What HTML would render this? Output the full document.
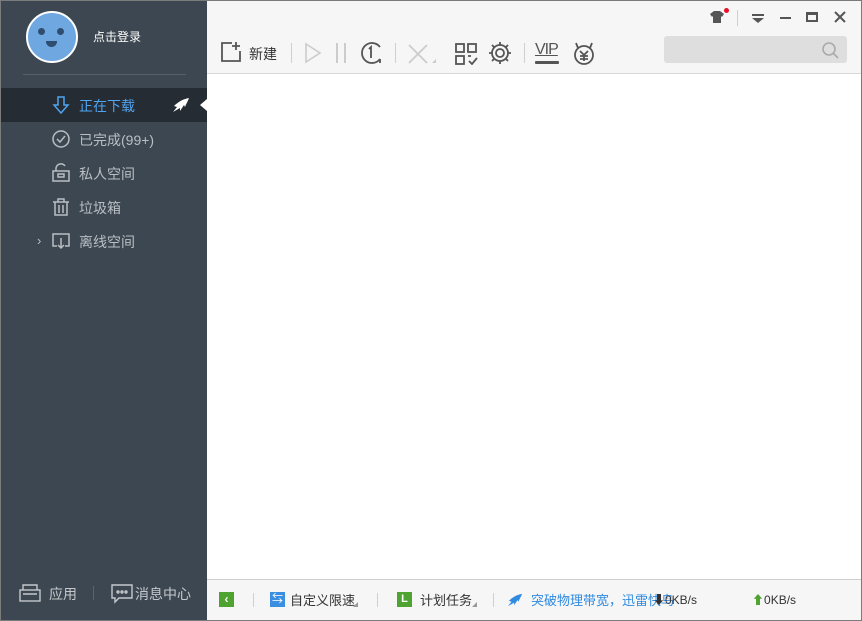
<!DOCTYPE html>
<html><head><meta charset="utf-8"><style>
*{margin:0;padding:0;box-sizing:border-box}
body{width:862px;height:621px;overflow:hidden;background:#fff;font-family:"Liberation Sans","Noto Sans CJK SC",sans-serif;position:relative}
.win{position:absolute;left:0;top:0;width:862px;height:621px;border:1px solid #7b7b7b}
.side{position:absolute;left:1px;top:1px;width:206px;height:619px;background:#3d4751}
.av{position:absolute;left:25px;top:10px;width:52px;height:52px;border-radius:50%;background:#6fa7e0;border:2px solid #fff}
.eye{position:absolute;width:7px;height:7px;border-radius:50%;background:#2f4d6e;top:15px}
.mouth{position:absolute;left:18px;top:28px;width:11px;height:6px;background:#2f4d6e;border-radius:0 0 6px 6px}
.login{position:absolute;left:92px;top:27px;color:#fff;font-size:12px}
.hr{position:absolute;left:22px;top:73px;width:163px;height:1px;background:#56606a}
.item{position:absolute;left:0;width:206px;height:34px;color:#b9bec3;font-size:14px;line-height:34px}
.item span{position:absolute;left:78px;top:1px}
.item svg{position:absolute;left:50px;top:7px}
.act{background:#262c33;color:#4fa3ef}
.main{position:absolute;left:207px;top:1px;width:654px;height:619px;background:#fff}
.tb{position:absolute;left:0;top:0;width:654px;height:73px;background:#f6f6f6;border-bottom:1px solid #d8d8d8}
.sb{position:absolute;left:0;bottom:0;width:654px;height:41px;background:#f6f6f6;border-top:1px solid #cfcfcf;font-size:13px;color:#333}
.ic{position:absolute}
.sep{position:absolute;width:1px;background:#d0d0d0}
</style></head><body>
<div class="win"></div>
<div class="side">
 <div class="av"><div class="eye" style="left:10px"></div><div class="eye" style="left:29px"></div><div class="mouth"></div></div>
 <div class="login">点击登录</div>
 <div class="hr"></div>
 <div class="item act" style="top:87px">
  <svg width="20" height="20" viewBox="0 0 20 20" fill="none" stroke="#4fa3ef" stroke-width="1.5"><path d="M7 2h6v8h4l-7 8-7-8h4z"/></svg>
  <span>正在下载</span>
  <svg style="left:171px;top:9px" width="18" height="16" viewBox="0 0 18 16" fill="#fff"><path d="M17 1C11 2 6 5 2 9l3 1-4 5 7-4 0 3 4-6 1 2c1-3 3-6 4-9z"/></svg>
  <div style="position:absolute;left:199px;top:11px;border-right:7px solid #fff;border-top:6px solid transparent;border-bottom:6px solid transparent"></div>
 </div>
 <div class="item" style="top:121px">
  <svg width="20" height="20" viewBox="0 0 20 20" fill="none" stroke="#b9bec3" stroke-width="1.5"><circle cx="10" cy="10" r="8"/><path d="M6 10l3 3 5-6"/></svg><span>已完成(99+)</span></div>
 <div class="item" style="top:155px">
  <svg width="20" height="20" viewBox="0 0 20 20" fill="none" stroke="#b9bec3" stroke-width="1.5"><path d="M5 8V5a5 5 0 0 1 9-2"/><rect x="2" y="8" width="16" height="10"/><rect x="7" y="11" width="6" height="3"/></svg><span>私人空间</span></div>
 <div class="item" style="top:189px">
  <svg width="20" height="20" viewBox="0 0 20 20" fill="none" stroke="#b9bec3" stroke-width="1.5"><path d="M2 5h16M7 5V2h6v3M4 5v13h12V5M8 8v8M12 8v8"/></svg><span>垃圾箱</span></div>
 <div class="item" style="top:223px">
  <div style="position:absolute;left:36px;top:0;color:#b9bec3;font-size:13px">›</div>
  <svg width="20" height="20" viewBox="0 0 20 20" fill="none" stroke="#b9bec3" stroke-width="1.5"><path d="M6 15H2V3h16v12h-4M10 7v10M7 14l3 3 3-3"/></svg><span>离线空间</span></div>
 <svg class="ic" style="left:18px;top:583px" width="22" height="18" viewBox="0 0 22 18" fill="none" stroke="#c4c8cc" stroke-width="1.4"><rect x="1" y="6" width="20" height="11"/><path d="M4 6V1h14v5M4 10h14"/></svg>
 <div style="position:absolute;left:48px;top:583px;color:#c4c8cc;font-size:14px">应用</div>
 <div style="position:absolute;left:92px;top:585px;width:1px;height:14px;background:#5a646e"></div>
 <svg class="ic" style="left:110px;top:583px" width="22" height="20" viewBox="0 0 22 20" fill="none" stroke="#c4c8cc" stroke-width="1.4"><path d="M1 1h20v13H8l-4 4v-4H1z"/><circle cx="7" cy="8" r="1"/><circle cx="11" cy="8" r="1"/><circle cx="15" cy="8" r="1"/></svg>
 <div style="position:absolute;left:134px;top:583px;color:#c4c8cc;font-size:14px">消息中心</div>
</div>
<div class="main">
 <div class="tb">
  <svg class="ic" style="left:13px;top:40px" width="22" height="22" viewBox="0 0 22 22" fill="none" stroke="#555" stroke-width="1.8"><path d="M12 2H2v18h18V10M16 1v8M12 5h8"/></svg>
  <div style="position:absolute;left:42px;top:43px;font-size:14px;color:#333">新建</div>
  <div class="sep" style="left:84px;top:42px;height:20px"></div>
  <svg class="ic" style="left:96px;top:41px" width="20" height="22" viewBox="0 0 20 22" fill="none" stroke="#ccc" stroke-width="1.6"><path d="M3 2l14 9-14 9z"/></svg>
  <div style="position:absolute;left:129px;top:42px;width:2px;height:20px;background:#ccc"></div>
  <div style="position:absolute;left:137px;top:42px;width:2px;height:20px;background:#ccc"></div>
  <svg class="ic" style="left:152px;top:40px" width="24" height="24" viewBox="0 0 24 24" fill="none" stroke="#555" stroke-width="1.8"><path d="M21 18A10 10 0 1 1 21 6M21 18v4"/><path d="M10 8l2-2v11" /></svg>
  <div class="sep" style="left:188px;top:42px;height:20px"></div>
  <svg class="ic" style="left:200px;top:42px" width="30" height="22" viewBox="0 0 30 22" fill="none" stroke="#ccc" stroke-width="1.8"><path d="M2 2l18 18M20 2L2 20"/><path d="M25 20h4v-4z" fill="#ccc" stroke="none"/></svg>
  <svg class="ic" style="left:248px;top:42px" width="24" height="22" viewBox="0 0 24 22" fill="none" stroke="#555" stroke-width="1.8"><rect x="1" y="1" width="8" height="8"/><rect x="13" y="1" width="8" height="8"/><rect x="1" y="13" width="8" height="8"/><path d="M13 13h3M14 18l3 3 5-6"/></svg>
  <svg class="ic" style="left:281px;top:40px" width="24" height="24" viewBox="0 0 24 24" fill="none" stroke="#555" stroke-width="1.8"><circle cx="12" cy="12" r="8"/><circle cx="12" cy="12" r="4"/><path d="M12 1v3M12 20v3M1 12h3M20 12h3M4 4l2 2M18 18l2 2M4 20l2-2M18 6l2-2"/></svg>
  <div class="sep" style="left:317px;top:42px;height:20px"></div>
  <div style="position:absolute;left:328px;top:40px;font-size:16px;color:#555;text-decoration:underline;letter-spacing:-1px">VIP</div>
  <div style="position:absolute;left:328px;top:60px;width:24px;height:3px;background:#555;border-radius:1px"></div>
  <svg class="ic" style="left:365px;top:40px" width="24" height="24" viewBox="0 0 24 24" fill="none" stroke="#555" stroke-width="1.8"><circle cx="12" cy="14" r="9"/><path d="M6 7L4 2M18 7l2-5M8 10l4 4 4-4M12 14v6M8 15h8M8 18h8"/></svg>
  <svg class="ic" style="left:503px;top:10px" width="14" height="12" viewBox="0 0 14 12" fill="#555"><path d="M4 0h6l4 3-2 3-1-1v7H3V5L2 6 0 3z"/></svg>
  <div style="position:absolute;left:517px;top:7px;width:5px;height:5px;border-radius:50%;background:#e8102a"></div>
  <div class="sep" style="left:530px;top:9px;height:16px"></div>
  <div style="position:absolute;left:545px;top:13px;width:12px;height:2px;background:#555"></div>
  <div style="position:absolute;left:545px;top:17px;border-top:5px solid #555;border-left:6px solid transparent;border-right:6px solid transparent"></div>
  <div style="position:absolute;left:573px;top:16px;width:11px;height:2px;background:#555"></div>
  <div style="position:absolute;left:599px;top:11px;width:12px;height:10px;border:2px solid #555;border-top-width:3px"></div>
  <svg class="ic" style="left:627px;top:10px" width="12" height="12" viewBox="0 0 12 12" stroke="#555" stroke-width="2"><path d="M1 1l10 10M11 1L1 11"/></svg>
  <div style="position:absolute;left:457px;top:35px;width:183px;height:27px;background:#dedede;border-radius:3px"></div>
  <svg class="ic" style="left:614px;top:40px" width="18" height="18" viewBox="0 0 18 18" fill="none" stroke="#aaa" stroke-width="1.6"><circle cx="8" cy="8" r="6"/><path d="M12 12l5 5"/></svg>
 </div>
 <div class="sb">
  <div style="position:absolute;left:12px;top:12px;width:15px;height:15px;background:#4ea331;color:#fff;font-size:12px;line-height:15px;text-align:center;font-weight:bold">‹</div>
  <div class="sep" style="left:46px;top:13px;height:14px"></div>
  <div style="position:absolute;left:63px;top:12px;width:15px;height:15px;background:#3b8fe0;color:#fff;font-size:11px;line-height:15px;text-align:center">⇆</div>
  <div style="position:absolute;left:83px;top:10px">自定义限速</div>
  <div style="position:absolute;left:146px;top:22px;border-bottom:5px solid #999;border-left:5px solid transparent"></div>
  <div class="sep" style="left:170px;top:13px;height:14px"></div>
  <div style="position:absolute;left:190px;top:12px;width:15px;height:15px;background:#4ea331;color:#fff;font-size:11px;line-height:15px;text-align:center;font-weight:bold">L</div>
  <div style="position:absolute;left:213px;top:10px">计划任务</div>
  <div style="position:absolute;left:265px;top:22px;border-bottom:5px solid #999;border-left:5px solid transparent"></div>
  <div class="sep" style="left:286px;top:13px;height:14px"></div>
  <svg class="ic" style="left:300px;top:13px" width="16" height="14" viewBox="0 0 18 16" fill="#2f8ae0"><path d="M17 1C11 2 6 5 2 9l3 1-4 5 7-4 0 3 4-6 1 2c1-3 3-6 4-9z"/></svg>
  <div style="position:absolute;left:324px;top:10px;color:#2f8ae0">突破物理带宽，迅雷快鸟</div>
  <div style="position:absolute;left:446px;top:11px;font-size:12px;color:#333">⬇0KB/s</div>
  <div style="position:absolute;left:545px;top:11px;font-size:12px;color:#333"><span style="color:#4ea331">⬆</span>0KB/s</div>
 </div>
</div>
</body></html>
